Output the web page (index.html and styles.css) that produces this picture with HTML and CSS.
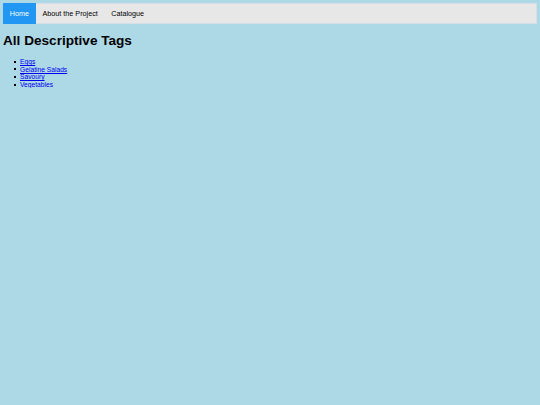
FILE: index.html
```html
<!DOCTYPE html>
<html>
<head>
  <meta charset="UTF-8">
  <title>All Descriptive Tags</title>
  <link rel="stylesheet" href="styles.css">
</head>
<body>
  <!-- Top navigation -->
  <ul class="topnav">
    <li><a class="active" href="#">Home</a></li>
    <li><a href="#">About the Project</a></li>
    <li><a href="#">Catalogue</a></li>
  </ul>

  <h1 class="page-title">All Descriptive Tags</h1>

  <ul class="tag-list">
    <li><a href="#">Eggs</a></li>
    <li><a href="#">Gelatine Salads</a></li>
    <li><a href="#">Savoury</a></li>
    <li><a href="#">Vegetables</a></li>
  </ul>
</body>
</html>
```

FILE: styles.css
```css
body {
  margin: 3px;
  background-color: #add8e6;
  font-family: 'Liberation Sans', Arial, sans-serif;
  color: black;
}

/* Navigation bar */
.topnav {
  list-style: none;
  margin: 0;
  padding: 0;
  display: flex;
  background-color: #e7e7e7;
  border: 1px solid #d6dfe3;
  height: 19px;
}

.topnav li a {
  display: block;
  height: 21px;
  line-height: 21px;
  margin: -1px 0;
  padding: 0 6.8px;
  font-size: 7.2px;
  color: black;
  text-decoration: none;
}

.topnav li:first-child a {
  margin-left: -1px;
}

.topnav li a.active {
  background-color: #2196f3;
  color: white;
}

/* Heading */
.page-title {
  font-size: 13.6px;
  font-weight: bold;
  margin: 8px 0 9px;
  line-height: 17px;
}

/* Tag links */
.tag-list {
  list-style: none;
  margin: 0;
  padding-left: 17px;
  font-size: 6.7px;
  line-height: 7.6px;
}

.tag-list li::before {
  content: "";
  display: inline-block;
  width: 2px;
  height: 2px;
  margin: 0 4px 1px -6px;
  vertical-align: middle;
  background: black;
}

.tag-list a {
  color: #0000ee;
}
```
